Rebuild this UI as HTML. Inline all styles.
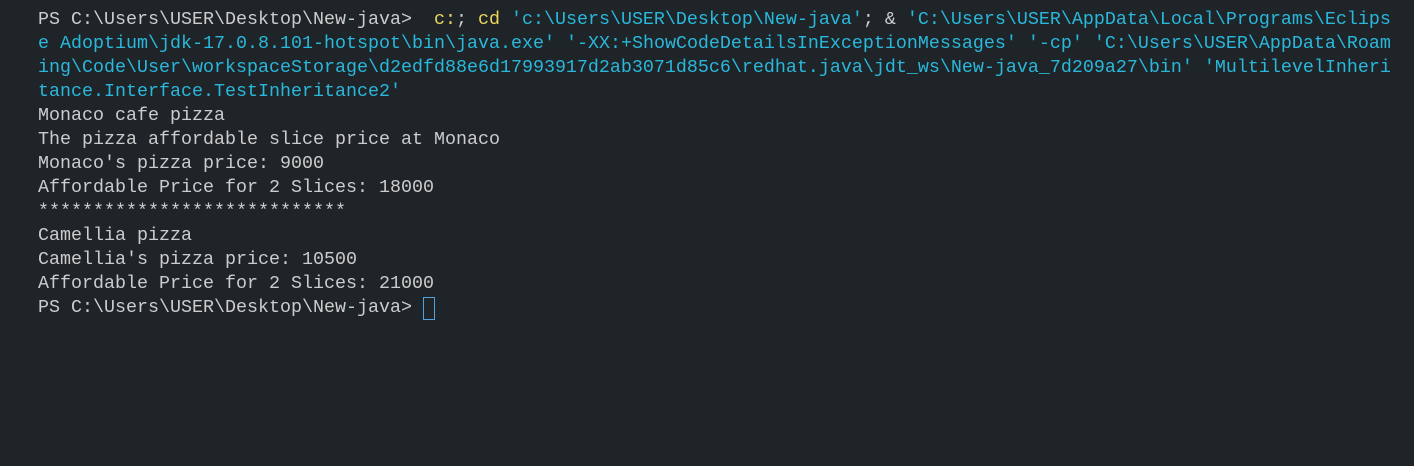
<!DOCTYPE html>
<html><head><meta charset="utf-8"><style>
html,body{margin:0;padding:0;background:#1f2428;width:1414px;height:466px;overflow:hidden}
pre{margin:0;position:absolute;left:38px;top:8px;font-family:"Liberation Mono",monospace;font-size:18.33px;line-height:24px;color:#cccccc;white-space:pre}
.y{color:#e9d85c}.c{color:#29b8db}
.cur{position:absolute;left:423px;top:297px;width:10px;height:21px;border:1px solid #4fa3e0}
</style></head><body><pre>PS C:\Users\USER\Desktop\New-java>  <span class="y">c:</span>; <span class="y">cd</span> <span class="c">'c:\Users\USER\Desktop\New-java'</span>; &amp; <span class="c">'C:\Users\USER\AppData\Local\Programs\Eclips
e Adoptium\jdk-17.0.8.101-hotspot\bin\java.exe'</span> <span class="c">'-XX:+ShowCodeDetailsInExceptionMessages'</span> <span class="c">'-cp'</span> <span class="c">'C:\Users\USER\AppData\Roam
ing\Code\User\workspaceStorage\d2edfd88e6d17993917d2ab3071d85c6\redhat.java\jdt_ws\New-java_7d209a27\bin'</span> <span class="c">'MultilevelInheri
tance.Interface.TestInheritance2'</span>
Monaco cafe pizza
The pizza affordable slice price at Monaco
Monaco's pizza price: 9000
Affordable Price for 2 Slices: 18000
****************************
Camellia pizza
Camellia's pizza price: 10500
Affordable Price for 2 Slices: 21000
PS C:\Users\USER\Desktop\New-java> </pre><div class="cur"></div></body></html>
